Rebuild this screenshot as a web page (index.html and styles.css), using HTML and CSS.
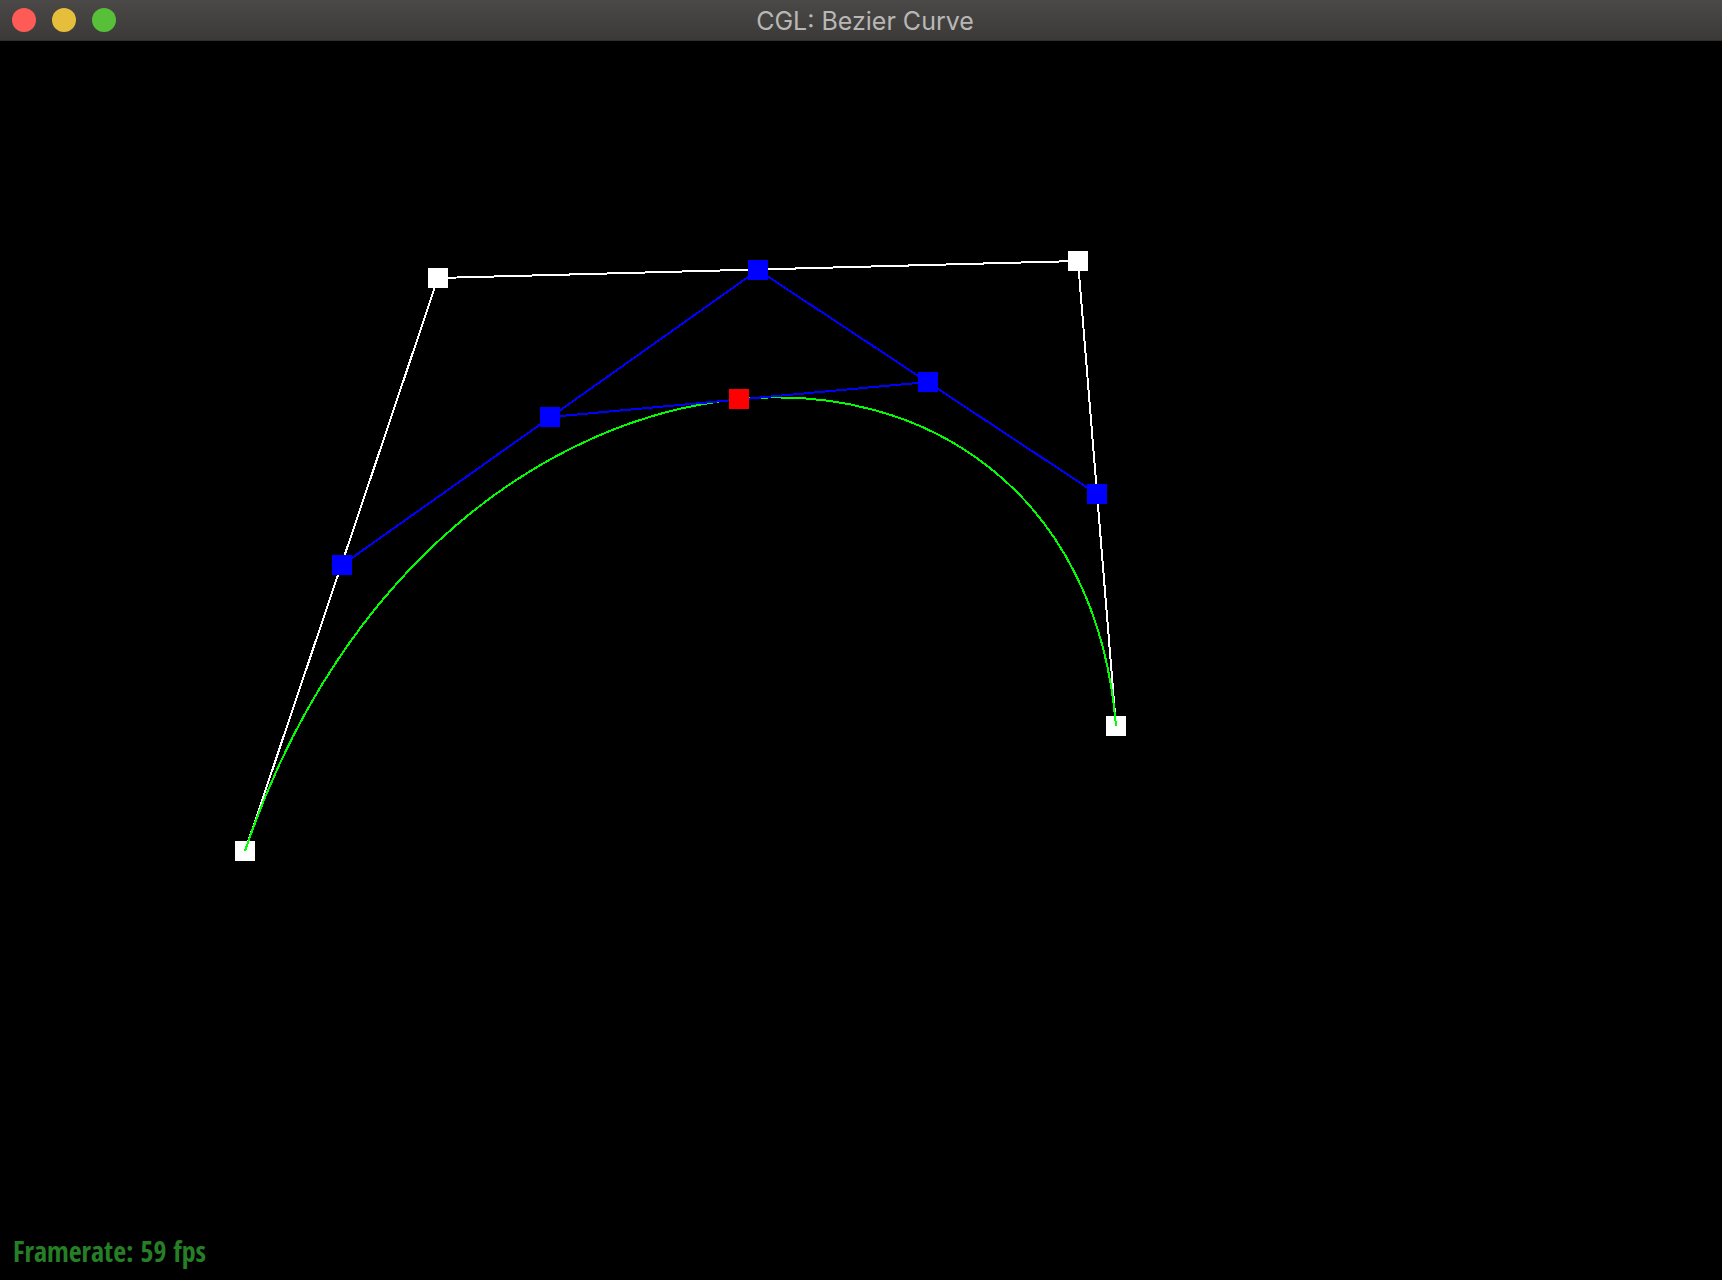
FILE: index.html
```html
<!DOCTYPE html>
<html lang="en">
<head>
<meta charset="utf-8">
<title>CGL: Bezier Curve</title>
<link rel="stylesheet" href="styles.css">
</head>
<body>
<div class="window">
  <header class="titlebar">
    <div class="controls">
      <button class="control close" type="button" aria-label="Close"></button>
      <button class="control minimize" type="button" aria-label="Minimize"></button>
      <button class="control maximize" type="button" aria-label="Zoom"></button>
    </div>
    <h1 class="title">CGL: Bezier Curve</h1>
  </header>
  <main class="viewport">
    <svg class="scene" viewBox="0 41 1722 1239" preserveAspectRatio="xMinYMin meet" role="img" aria-label="Cubic Bezier curve with control points">
      <path class="hull" d="M245 851 438 278 1078 261 1116 726"/>
      <g class="control-point">
        <rect x="235" y="841" width="20" height="20"/>
        <rect x="428" y="268" width="20" height="20"/>
        <rect x="1068" y="251" width="20" height="20"/>
        <rect x="1106" y="716" width="20" height="20"/>
      </g>
      <path class="curve" d="M245 851C438 278 1078 261 1116 726"/>
      <path class="steps" d="M342 565 758 270 1097 494M550 417 928 382"/>
      <g class="step-point">
        <rect x="332" y="555" width="20" height="20"/>
        <rect x="748" y="260" width="20" height="20"/>
        <rect x="1087" y="484" width="20" height="20"/>
        <rect x="540" y="407" width="20" height="20"/>
        <rect x="918" y="372" width="20" height="20"/>
      </g>
      <rect class="curve-point" x="729" y="389" width="20" height="20"/>
    </svg>
    <p class="framerate">Framerate: 59 fps</p>
  </main>
</div>
</body>
</html>
```
FILE: styles.css
```css
* {
  box-sizing: border-box;
}

body {
  margin: 0;
  background: #000;
}

.window {
  display: flex;
  flex-direction: column;
  min-height: 100vh;
}

.titlebar {
  display: grid;
  grid-template-columns: 128px 1fr 120px;
  align-items: center;
  height: 41px;
  padding: 0;
  border-bottom: 1px solid #302f2e;
  background: linear-gradient(#4a4947, #3b3a38);
}

.controls {
  display: flex;
  gap: 16px;
  padding-left: 12px;
}

.control {
  width: 24px;
  height: 24px;
  padding: 0;
  border: 0;
  border-radius: 50%;
}

.close {
  background: #ff5b56;
}

.minimize {
  background: #e5bf3c;
}

.maximize {
  background: #57c038;
}

.title {
  margin: 0;
  padding-top: 2px;
  color: #b8b7b6;
  font: 400 25px/38px Inter, "Liberation Sans", sans-serif;
  text-align: center;
}

.viewport {
  position: relative;
  flex: 1;
}

.scene {
  display: block;
  width: 100%;
  shape-rendering: crispEdges;
}

.hull,
.curve,
.steps {
  fill: none;
  stroke-width: 2;
}

.hull {
  stroke: #fff;
}

.curve {
  stroke: #0f0;
}

.steps {
  stroke: #00f;
}

.control-point {
  fill: #fff;
}

.step-point {
  fill: #00f;
}

.curve-point {
  fill: #f00;
}

.framerate {
  position: absolute;
  bottom: 9px;
  left: 13px;
  margin: 0;
  color: #267f26;
  font: 700 28px/40px "Open Sans Condensed", "Noto Sans Condensed", "Open Sans", sans-serif;
}
```
